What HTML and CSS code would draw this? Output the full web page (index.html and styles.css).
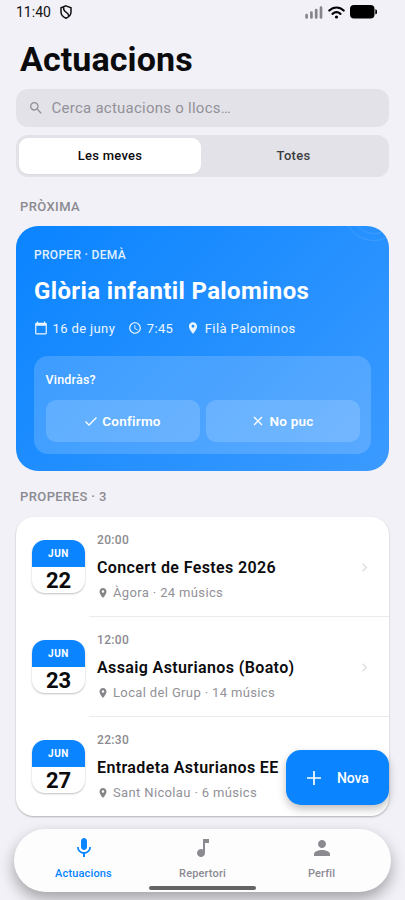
FILE: index.html
```html
<!DOCTYPE html>
<html lang="ca">
<head>
<meta charset="utf-8">
<meta name="viewport" content="width=device-width, initial-scale=1">
<title>Actuacions</title>
<link rel="stylesheet" href="styles.css">
</head>
<body>
<svg class="sprite" aria-hidden="true">
  <symbol id="pin" viewBox="0 0 24 24"><path fill="currentColor" d="M12 2C8.13 2 5 5.13 5 9c0 5.25 7 13 7 13s7-7.75 7-13c0-3.87-3.13-7-7-7zm0 9.500a2.500 2.500 0 1 1 0-5 2.500 2.500 0 0 1 0 5z"/></symbol>
  <symbol id="chevron" viewBox="0 0 24 24"><path fill="currentColor" d="M8.590 16.590 13.170 12 8.590 7.410 10 6l6 6-6 6z"/></symbol>
</svg>
<div class="screen">
  <header class="status">
    <span class="clock">11:40</span>
    <svg class="shield" viewBox="0 0 12 14"><path d="M6 .9 11 2.700V7c0 3-2.200 5-5 6.200C3.200 12 1 10 1 7V2.700zM3.600 2c-.3 3 .6 4.200 2.400 5.200 2 1.100 2.700 2.200 2.800 4" fill="none" stroke="#111" stroke-width="1.500"/></svg>
    <span class="spacer"></span>
    <svg class="signal" viewBox="0 0 18 13"><path d="M1.600 9.200v2.300M6.400 6.500v5M11.200 4v7.500M16 1.700v9.800" stroke="#858488" stroke-width="2.700" stroke-linecap="round"/></svg>
    <svg class="wifi" viewBox="0 0 17 13"><path d="M1.300 4.600c4.100-4.100 10.300-4.100 14.400 0M4.500 7.900c2.400-2.100 5.600-2.100 8 0" fill="none" stroke="#000" stroke-width="2.100" stroke-linecap="round"/><circle cx="8.500" cy="11" r="1.600"/></svg>
    <svg class="battery" viewBox="0 0 27 14"><rect width="24.500" height="13.500" rx="4"/><path d="M25.300 4.200q1.700 0 1.700 1.500v2q0 1.500-1.700 1.500z"/></svg>
  </header>

  <main class="content">
    <h1 class="title">Actuacions</h1>
    <div class="search">
      <svg class="search-icon" viewBox="0 0 24 24"><path fill="currentColor" d="M15.500 14h-.79l-.28-.27A6.471 6.471 0 0 0 16 9.500 6.500 6.500 0 1 0 9.500 16c1.610 0 3.090-.59 4.230-1.570l.27.28v.79l5 4.990L20.490 19zm-6 0C7.010 14 5 11.990 5 9.500S7.010 5 9.500 5 14 7.010 14 9.500 11.990 14 9.500 14z"/></svg>
      <span>Cerca actuacions o llocs…</span>
    </div>
    <div class="segments">
      <div class="segment selected">Les meves</div>
      <div class="segment">Totes</div>
    </div>

    <h2 class="section">PRÒXIMA</h2>
    <section class="hero">
      <svg class="rings" viewBox="0 0 44 20"><g fill="none" stroke="#fff" stroke-opacity=".11"><circle cx="29" cy="-15" r="29.500"/><circle cx="29" cy="-15" r="22.500"/></g></svg>
      <div class="eyebrow">PROPER · DEMÀ</div>
      <div class="hero-title">Glòria infantil Palominos</div>
      <div class="facts">
        <svg viewBox="0 0 24 24"><path fill="currentColor" d="M20 3h-1V1h-2v2H7V1H5v2H4c-1.100 0-2 .9-2 2v16c0 1.100.9 2 2 2h16c1.100 0 2-.9 2-2V5c0-1.100-.9-2-2-2zm0 18H4V8h16z"/></svg>
        <span class="fact-date">16 de juny</span>
        <svg viewBox="0 0 24 24"><path fill="currentColor" d="M11.990 2C6.470 2 2 6.480 2 12s4.470 10 9.990 10C17.520 22 22 17.520 22 12S17.520 2 11.990 2zM12 20a8 8 0 1 1 0-16 8 8 0 0 1 0 16zm.5-13H11v6l5.250 3.150.75-1.230-4.500-2.670z"/></svg>
        <span class="fact-time">7:45</span>
        <svg><use href="#pin"/></svg>
        <span>Filà Palominos</span>
      </div>
      <div class="rsvp">
        <div class="question">Vindràs?</div>
        <div class="answers">
          <div class="answer"><svg viewBox="0 0 14 14"><path d="m1.500 7.500 3.500 3.500L12.500 3.500"/></svg>Confirmo</div>
          <div class="answer"><svg viewBox="0 0 14 14"><path d="m3 3 8 8M11 3l-8 8"/></svg>No puc</div>
        </div>
      </div>
    </section>

    <h2 class="section upcoming">PROPERES · 3</h2>
    <section class="list">
      <article class="event">
        <div class="date"><span class="month">JUN</span><span class="day">22</span></div>
        <div class="details">
          <div class="time">20:00</div>
          <div class="name">Concert de Festes 2026</div>
          <div class="place"><svg><use href="#pin"/></svg>Àgora · 24 músics</div>
        </div>
        <svg class="chevron"><use href="#chevron"/></svg>
      </article>
      <article class="event">
        <div class="date"><span class="month">JUN</span><span class="day">23</span></div>
        <div class="details">
          <div class="time">12:00</div>
          <div class="name">Assaig Asturianos (Boato)</div>
          <div class="place"><svg><use href="#pin"/></svg>Local del Grup · 14 músics</div>
        </div>
        <svg class="chevron"><use href="#chevron"/></svg>
      </article>
      <article class="event">
        <div class="date"><span class="month">JUN</span><span class="day">27</span></div>
        <div class="details">
          <div class="time">22:30</div>
          <div class="name">Entradeta Asturianos EE</div>
          <div class="place"><svg><use href="#pin"/></svg>Sant Nicolau · 6 músics</div>
        </div>
      </article>
    </section>
  </main>

  <div class="fab"><svg viewBox="0 0 14 14"><path d="M7 0v14M0 7h14" stroke="#fff" stroke-width="1.700"/></svg>Nova</div>

  <nav class="tabs">
    <div class="tab active"><svg viewBox="0 0 24 24"><path fill="currentColor" d="M12 14c1.660 0 2.990-1.340 2.990-3L15 5c0-1.660-1.340-3-3-3S9 3.340 9 5v6c0 1.660 1.340 3 3 3zm5.300-3c0 3-2.540 5.100-5.300 5.100S6.700 14 6.700 11H5c0 3.410 2.720 6.230 6 6.720V21h2v-3.280c3.280-.48 6-3.300 6-6.720z"/></svg><span>Actuacions</span></div>
    <div class="tab"><svg viewBox="0 0 24 24"><path fill="currentColor" d="M12 3v10.550A4 4 0 1 0 14 17V7h4V3z"/></svg><span>Repertori</span></div>
    <div class="tab"><svg viewBox="0 0 24 24"><path fill="currentColor" d="M12 12c2.210 0 4-1.790 4-4s-1.790-4-4-4-4 1.790-4 4 1.790 4 4 4zm0 2c-2.670 0-8 1.340-8 4v2h16v-2c0-2.660-5.330-4-8-4z"/></svg><span>Perfil</span></div>
  </nav>
  <div class="home-bar"></div>
</div>
</body>
</html>
```
FILE: styles.css
```css
* { box-sizing: border-box; }
body { margin: 0; background: #f2f1f7; font-family: Roboto, sans-serif; color: #0b0b0d; }
svg { display: block; flex: none; }
.sprite { position: absolute; width: 0; height: 0; }
.screen { position: relative; height: 900px; overflow: hidden; }

.status { display: flex; align-items: center; height: 24px; padding: 0 28px 0 16px; }
.clock { font-size: 14px; letter-spacing: 0; color: #111; width: 44px; }
.spacer { flex: 1; }
.shield { width: 12px; height: 14px; }
.signal { width: 18px; height: 13px; margin-right: 5px; }
.wifi { width: 17px; height: 13px; margin-right: 5px; }
.battery { width: 27px; height: 14px; }

.content { padding: 0 16px; }
.title { margin: 15px 4px 9px; font-size: 34px; line-height: 41px; font-weight: 700; letter-spacing: .1px; }
.search { display: flex; align-items: center; gap: 7.500px; height: 37.500px; padding: 0 12px; border-radius: 12px; background: #e3e2e8; color: #929198; font-size: 15px; letter-spacing: .25px; }
.search-icon { width: 16px; height: 16px; }
.segments { display: grid; grid-template-columns: 182px 1fr; height: 41.500px; margin-top: 8.500px; padding: 3px; border-radius: 12px; background: #e3e2e8; }
.segment { display: flex; align-items: center; justify-content: center; font-size: 13px; font-weight: 500; letter-spacing: .28px; color: #3c3c41; }
.segment.selected { border-radius: 9px; background: #fff; color: #0b0b0d; box-shadow: 0 1px 1px #0000000a; }
.section { margin: 20.500px 4px 10px; font-size: 13px; line-height: 19px; font-weight: 500; letter-spacing: .4px; color: #8b8a91; }

.hero { position: relative; height: 245px; padding: 20px 18px 18px; border-radius: 22px; overflow: hidden; color: #fff; background: linear-gradient(135deg, #0a84ff, #3b9aff); }
.rings { position: absolute; top: 0; right: 0; width: 44px; height: 20px; }
.eyebrow { font-size: 12px; line-height: 19px; font-weight: 500; letter-spacing: .3px; color: #e0f0ff; }
.hero-title { margin-top: 11px; font-size: 24px; line-height: 30px; font-weight: 700; letter-spacing: .36px; white-space: nowrap; }
.facts { display: flex; align-items: center; height: 20px; margin-top: 12px; font-size: 13px; line-height: 17px; letter-spacing: .38px; color: #edf6ff; }
.facts svg { width: 14px; height: 14px; margin-right: 4.500px; }
.fact-date, .fact-time { margin-right: 13px; }
.rsvp { height: 97.500px; margin-top: 18px; padding: 12px 11.500px; border-radius: 14px; background: #ffffff2b; }
.question { font-size: 12.500px; line-height: 23px; font-weight: 500; letter-spacing: .2px; }
.answers { display: grid; grid-template-columns: 1fr 1fr; gap: 6px; margin-top: 9px; }
.answer { display: flex; align-items: center; justify-content: center; gap: 4px; height: 41.500px; border-radius: 10px; background: #ffffff29; font-size: 13.500px; font-weight: 600; letter-spacing: .25px; }
.answer svg { width: 14px; height: 14px; fill: none; stroke: #fff; stroke-width: 1.300; }

.upcoming { margin-top: 16px; margin-bottom: 11px; }
.list { border-radius: 18px; background: #fff; box-shadow: 0 1px 2px #00000045; }
.event { position: relative; display: flex; height: 100px; padding: 14px 16px; }
.event:last-child { height: 99px; }
.event + .event::before { content: ""; position: absolute; top: -1px; left: 73px; right: 0; height: 1px; background: #ebebee; }
.date { display: flex; flex-direction: column; width: 53px; height: 53px; margin: 9px 12px 0 0; border-radius: 13px; overflow: hidden; background: #fff; box-shadow: 0 1px 2px #00000040; text-align: center; }
.month { height: 27px; background: #0a84ff; color: #fff; font-size: 10px; line-height: 27px; font-weight: 700; letter-spacing: .6px; }
.day { font-size: 22px; line-height: 27px; font-weight: 700; }
.details { flex: 1; min-width: 0; white-space: nowrap; }
.time { font-size: 12px; line-height: 19px; font-weight: 500; letter-spacing: .35px; color: #8b8a91; }
.name { margin-top: 6px; font-size: 16px; line-height: 24px; font-weight: 600; letter-spacing: .38px; }
.place { display: flex; align-items: center; height: 20px; margin-top: 2.500px; font-size: 13px; letter-spacing: .36px; color: #929198; }
.place svg { width: 12px; height: 12px; margin-right: 4px; color: #858488; }
.chevron { width: 17px; height: 17px; margin-top: 28px; color: #dededf; }

.fab { position: absolute; left: 286px; top: 750px; width: 103px; height: 55px; display: flex; align-items: center; gap: 16px; padding-left: 21px; border-radius: 15px; background: #0a84ff; color: #fff; font-size: 14px; font-weight: 500; letter-spacing: -.1px; box-shadow: 0 4px 8px #00000040; }
.fab svg { width: 14px; height: 14px; }
.tabs { position: absolute; left: 14px; top: 829px; width: 377px; height: 63px; display: grid; grid-template-columns: 139px 99px 139px; border-radius: 32px; background: #fdfdfe; box-shadow: 0 7px 15px #00000055; }
.tab { display: flex; flex-direction: column; align-items: center; padding-top: 7px; color: #8b8a91; font-size: 11px; font-weight: 500; letter-spacing: .15px; }
.tab svg { width: 24px; height: 24px; }
.tab span { margin-top: 6px; line-height: 16px; }
.tab.active { color: #0a84ff; }
.home-bar { position: absolute; left: 149px; top: 886px; width: 107px; height: 4px; border-radius: 2px; background: #646366; }
```
